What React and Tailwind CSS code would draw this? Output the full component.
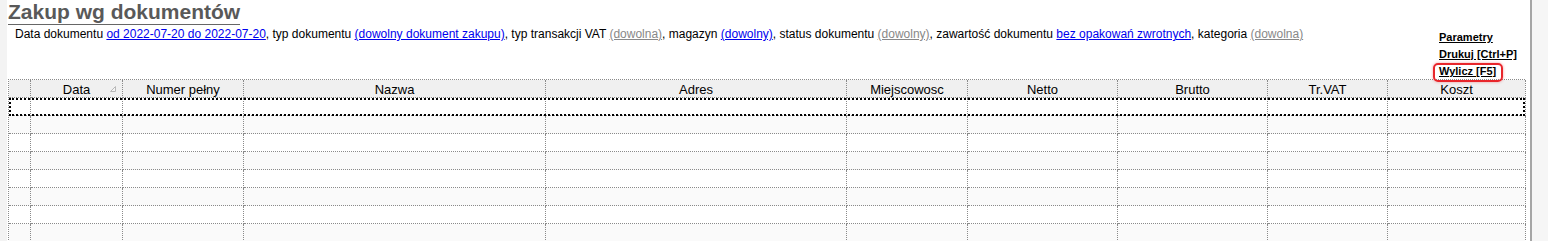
import React from 'react';

const columns = [
    { label: '', width: 'w-[22px]' },
    { label: 'Data', width: 'w-[92px]', sorted: true },
    { label: 'Numer pełny', width: 'w-[121px]' },
    { label: 'Nazwa', width: 'w-[302px]' },
    { label: 'Adres', width: 'w-[301px]' },
    { label: 'Miejscowosc', width: 'w-[121px]' },
    { label: 'Netto', width: 'w-[150px]' },
    { label: 'Brutto', width: 'w-[150px]' },
    { label: 'Tr.VAT', width: 'w-[120px]' },
    { label: 'Koszt', width: 'w-[138px]' },
];

const rows = [1, 2, 3, 4, 5, 6, 7, 8];

function BlueLink({ children }) {
    return <a className="text-[#0000ee] underline cursor-pointer">{children}</a>;
}

function GrayLink({ children }) {
    return <a className="text-[#888888] underline cursor-pointer">{children}</a>;
}

function SortMark() {
    return (
        <svg width="6" height="6" viewBox="0 0 6 6" className="absolute right-[6px] top-[6px]">
            <polygon points="0.5,5.5 5.5,0.5 5.5,5.5" fill="#f4f4f4" stroke="#b8b8b8" strokeWidth="1" />
        </svg>
    );
}

function App() {
    return (
        <div className="flex h-[241px] w-[1548px] overflow-hidden bg-white font-['Liberation_Sans',Arial,sans-serif]">
            {/* left margin strip */}
            <div className="w-[7px] shrink-0 bg-[#f3f3f3]" />

            <div className="w-[1523px] shrink-0 pl-[1px] pr-[5px]">
                {/* Title */}
                <div className="h-[26px]">
                    <h1 className="inline-block text-[21px] font-bold leading-[24px] text-[#595959] border-b border-[#666666]">
                        Zakup wg dokumentów
                    </h1>
                </div>

                <div className="flex h-[53px] items-start justify-between">
                    <p className="pl-[7px] pt-[1px] text-[12px] leading-[14px] text-black">
                        Data dokumentu <BlueLink>od 2022-07-20 do 2022-07-20</BlueLink>, typ dokumentu{' '}
                        <BlueLink>(dowolny dokument zakupu)</BlueLink>, typ transakcji VAT{' '}
                        <GrayLink>(dowolna)</GrayLink>, magazyn <BlueLink>(dowolny)</BlueLink>, status dokumentu{' '}
                        <GrayLink>(dowolny)</GrayLink>, zawartość dokumentu{' '}
                        <BlueLink>bez opakowań zwrotnych</BlueLink>, kategoria <GrayLink>(dowolna)</GrayLink>
                    </p>

                    <div className="flex w-[86px] flex-col pt-[3px] text-[11px] font-bold leading-[17px] text-black">
                        <a className="underline">Parametry</a>
                        <a className="underline">Drukuj [Ctrl+P]</a>
                        <span className="relative z-10 self-start">
                            <a className="underline">Wylicz [F5]</a>
                            <span className="absolute -left-[6px] -right-[7px] top-0 -bottom-[2px] rounded-[5px] border-2 border-[#e8262b] shadow-[0_0_3px_rgba(232,38,43,0.45)]" />
                        </span>
                    </div>
                </div>

                {/* Grid */}
                <div className="border-l border-t border-dotted border-[#8a8a8a] text-[13px] text-black">
                    <div className="flex h-[18px] bg-[#f0f0f0]">
                        {columns.map((col, i) => (
                            <div
                                key={i}
                                className={`${col.width} relative shrink-0 border-r border-b border-dotted border-[#8a8a8a] text-center leading-[17px] pt-[1px]`}
                            >
                                {col.label}
                                {col.sorted && <SortMark />}
                            </div>
                        ))}
                    </div>

                    {rows.map(r => (
                        <div
                            key={r}
                            className={
                                r === 1
                                    ? 'flex h-[18px] bg-white outline-2 outline-dotted outline-black -outline-offset-2'
                                    : r % 2 === 0
                                        ? 'flex h-[18px] bg-[#fafafa]'
                                        : 'flex h-[18px] bg-white'
                            }
                        >
                            {columns.map((col, i) => (
                                <div
                                    key={i}
                                    className={`${col.width} shrink-0 border-r border-b border-dotted border-[#8a8a8a]`}
                                />
                            ))}
                        </div>
                    ))}
                </div>
            </div>

            {/* right edge */}
            <div className="w-[2px] shrink-0 bg-[#a6a6a6]" />
            <div className="flex-1 bg-[#f6f6f6]" />
        </div>
    );
}

export default App;
